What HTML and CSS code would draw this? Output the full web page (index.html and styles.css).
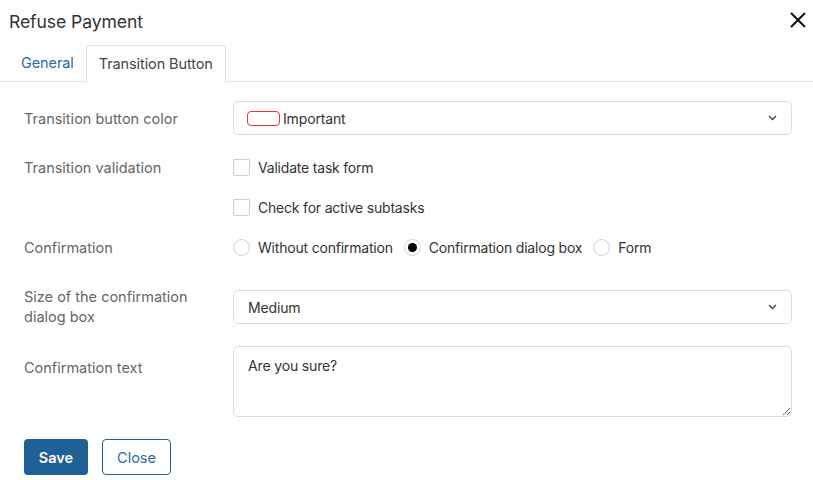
FILE: index.html
```html
<!DOCTYPE html>
<html>
<head>
<meta charset="utf-8">
<link rel="stylesheet" href="styles.css">
</head>
<body>
<div class="dialog">
  <div class="header">
    <div class="title">Refuse Payment</div>
    <svg class="close-x" width="18" height="18" viewBox="0 0 18 18"><path d="M2 2 L16 16 M16 2 L2 16" stroke="#111" stroke-width="2" fill="none"/></svg>
  </div>
  <div class="tabs">
    <div class="tab">General</div>
    <div class="tab active">Transition Button</div>
  </div>
  <div class="form">
    <div class="row row-select">
      <div class="label">Transition button color</div>
      <div class="control">
        <div class="select">
          <span class="swatch"></span><span class="sel-text">Important</span>
          <svg class="chev" width="9" height="6" viewBox="0 0 9 6"><path d="M1 1 L4.5 4.5 L8 1" stroke="#2c4660" stroke-width="1.3" fill="none"/></svg>
        </div>
      </div>
    </div>
    <div class="row">
      <div class="label line">Transition validation</div>
      <div class="control">
        <div class="line"><span class="checkbox"></span><span class="opt">Validate task form</span></div>
        <div class="line"><span class="checkbox"></span><span class="opt">Check for active subtasks</span></div>
      </div>
    </div>
    <div class="row">
      <div class="label line">Confirmation</div>
      <div class="control">
        <div class="line radios">
          <span class="radio"></span><span class="opt">Without confirmation</span>
          <span class="radio checked"></span><span class="opt">Confirmation dialog box</span>
          <span class="radio"></span><span class="opt">Form</span>
        </div>
      </div>
    </div>
    <div class="row row-size">
      <div class="label two">Size of the confirmation dialog box</div>
      <div class="control">
        <div class="select">
          <span class="sel-text plain">Medium</span>
          <svg class="chev" width="9" height="6" viewBox="0 0 9 6"><path d="M1 1 L4.5 4.5 L8 1" stroke="#2c4660" stroke-width="1.3" fill="none"/></svg>
        </div>
      </div>
    </div>
    <div class="row row-text">
      <div class="label text-label">Confirmation text</div>
      <div class="control">
        <textarea class="textarea">Are you sure?</textarea>
      </div>
    </div>
    <div class="buttons">
      <button class="btn primary">Save</button>
      <button class="btn secondary">Close</button>
    </div>
  </div>
</div>
</body>
</html>
```
FILE: styles.css
```css
* { box-sizing: border-box; }
html, body { margin: 0; padding: 0; background: #fff; }
body { font-family: Inter, "Noto Sans", sans-serif; color: #333; width: 813px; height: 480px; overflow: hidden; }

.header { height: 45px; display: flex; align-items: center; justify-content: space-between; padding: 0 6px 3px 9px; }
.title { font-size: 17.6px; color: #333; letter-spacing: -0.1px; }
.close-x { display: block; margin-top: -3px; }

.tabs { display: flex; height: 37px; border-bottom: 1px solid #e3e3e3; padding-left: 9px; }
.tab { font-size: 14.5px; letter-spacing: -0.1px; padding: 0 12px; line-height: 36px; color: #2a6aa3; }
.tab.active { color: #444; border: 1px solid #e0e0e0; border-bottom: none; border-radius: 3px 3px 0 0; background: #fff; height: 37px; margin-bottom: -1px; line-height: 35px; }

.form { padding: 19px 21px 0 24px; }
.row { display: flex; }
.label { width: 209px; flex: none; font-size: 14.5px; color: #666; }
.control { flex: 1; }

.row-select { align-items: center; margin-bottom: 12px; }
.select { height: 34px; border: 1px solid #dcdcdc; border-radius: 5px; display: flex; align-items: center; padding: 0 14px 0 13px; font-size: 14px; letter-spacing: -0.15px; color: #333; }
.swatch { width: 33px; height: 15px; border: 1px solid #e0323f; border-radius: 4px; margin-right: 3px; margin-top: 1px; }
.sel-text { flex: 1; }
.sel-text.plain { padding-left: 1px; }
.chev { display: block; }

.line { height: 40px; display: flex; align-items: center; }
.opt { font-size: 14px; letter-spacing: -0.2px; color: #333; }
.checkbox { width: 17px; height: 17px; border: 1px solid #cfcfcf; border-radius: 1px; margin-right: 8px; background: #fff; }
.radios .opt { margin-right: 11px; }
.radio { width: 17px; height: 17px; border: 1px solid #cfcfcf; border-radius: 50%; margin-right: 8px; display: flex; align-items: center; justify-content: center; }
.radio.checked::after { content: ""; width: 9px; height: 9px; border-radius: 50%; background: #000; }

.row-size { margin-top: 23px; align-items: center; }
.label.two { line-height: 20px; margin: -3px 0; }

.row-text { margin-top: 22px; }
.text-label { padding-top: 11px; line-height: 22px; }
.textarea { display: block; width: 100%; height: 71px; border: 1px solid #dcdcdc; border-radius: 5px; font-family: Inter, "Noto Sans", sans-serif; font-size: 14px; letter-spacing: -0.15px; color: #333; padding: 10px 14px 8px; resize: vertical; outline: none; }

.buttons { display: flex; gap: 14px; margin-top: 22px; }
.btn { height: 36px; border-radius: 4px; font-family: Inter, "Noto Sans", sans-serif; font-size: 14.5px; padding: 0; }
.btn.primary { width: 64px; background: #1f6196; color: #fff; border: none; font-weight: 600; }
.btn.secondary { width: 69px; background: #fff; color: #2a6aa3; border: 1px solid #1f6196; }
```
